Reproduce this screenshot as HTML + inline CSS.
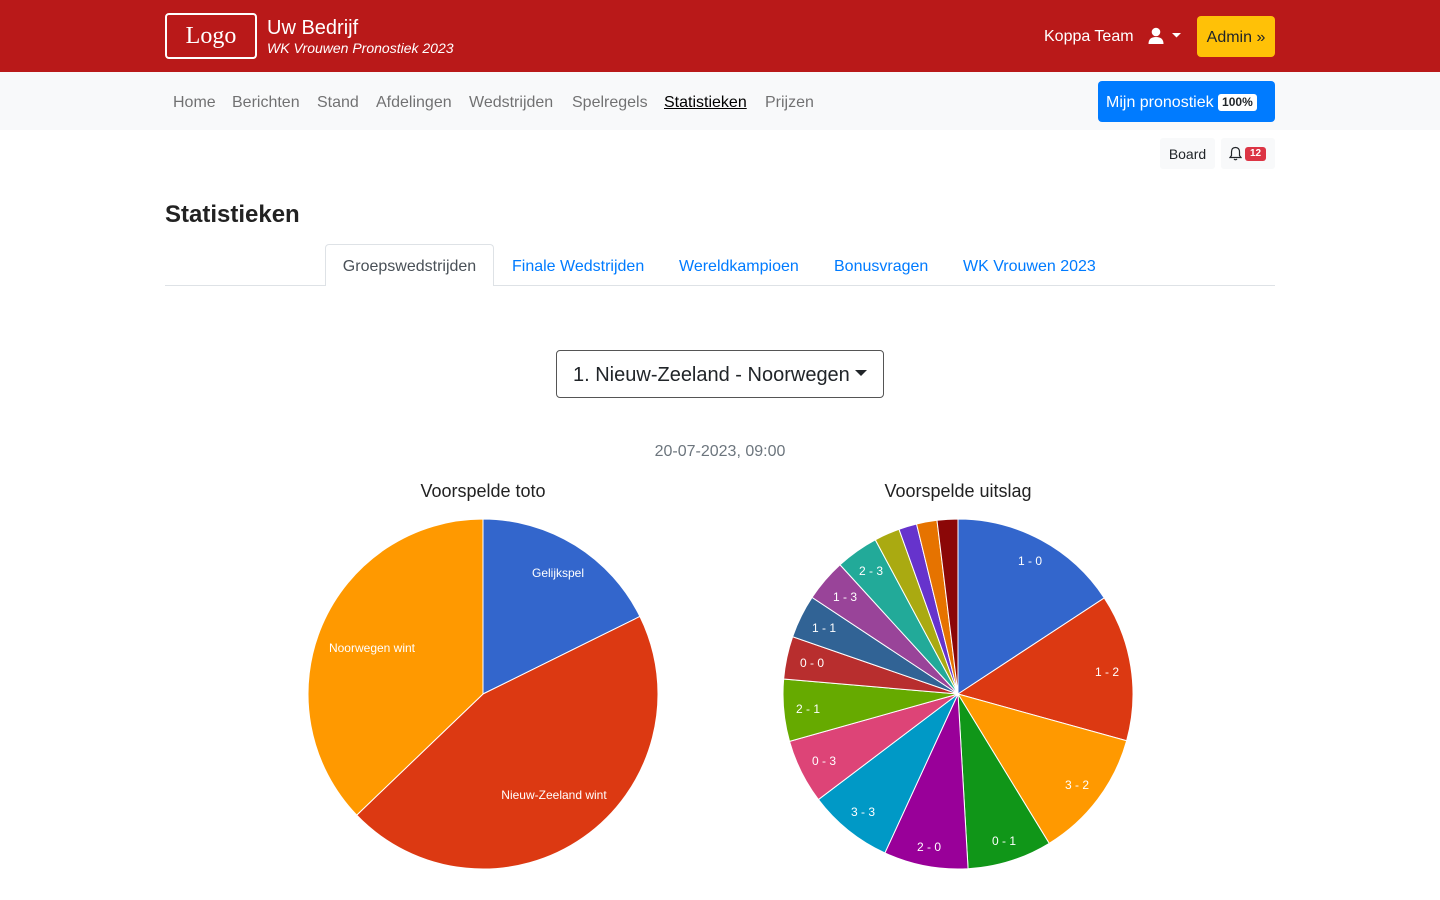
<!DOCTYPE html>
<html><head><meta charset="utf-8"><style>
*{box-sizing:border-box;margin:0;padding:0}
body{width:1440px;height:900px;overflow:hidden;font-family:"Liberation Sans",Arial,sans-serif;background:#fff;color:#212529;position:relative}
.abs{position:absolute}
#hdr{left:0;top:0;width:1440px;height:72px;background:#b91919}
#nav{left:0;top:72px;width:1440px;height:58px;background:#f8f9fa}
.nv{top:94px;font-size:16px;color:rgba(0,0,0,.55)}
.tab{top:258px;font-size:16px;color:#007bff}
</style></head><body>
<div id="hdr" class="abs"></div>
<div class="abs" style="left:165px;top:13px;width:92px;height:46px;border:2px solid #fff;border-radius:4px;color:#fff;font-family:'Liberation Serif',serif;font-size:24px;text-align:center;line-height:42px">Logo</div>
<div class="abs" style="left:267px;top:17px;color:#fff;font-size:20px">Uw Bedrijf</div>
<div class="abs" style="left:267px;top:40px;color:#fff;font-size:14px;font-style:italic">WK Vrouwen Pronostiek 2023</div>
<div class="abs" style="left:1044px;top:28px;color:#fff;font-size:16px">Koppa Team</div>
<svg class="abs" style="left:1148px;top:27px" width="36" height="18" viewBox="0 0 36 18"><circle cx="8" cy="5" r="4.3" fill="#fff"/><path d="M0.5 17 Q0.5 10 8 10 Q15.5 10 15.5 17Z" fill="#fff"/><path d="M24 6 L33 6 L28.5 10.5Z" fill="#fff"/></svg>
<div class="abs" style="left:1197px;top:16px;width:78px;height:41px;background:#ffc107;border-radius:4px;font-size:16px;color:#212529;text-align:center;line-height:43px">Admin »</div>
<div id="nav" class="abs"></div>
<div class="abs nv" style="left:173px">Home</div>
<div class="abs nv" style="left:232px">Berichten</div>
<div class="abs nv" style="left:317px">Stand</div>
<div class="abs nv" style="left:376px">Afdelingen</div>
<div class="abs nv" style="left:469px">Wedstrijden</div>
<div class="abs nv" style="left:572px">Spelregels</div>
<div class="abs nv" style="left:664px;color:#000;text-decoration:underline">Statistieken</div>
<div class="abs nv" style="left:765px">Prijzen</div>
<div class="abs" style="left:1098px;top:81px;width:177px;height:41px;background:#007bff;border-radius:4px;color:#fff;font-size:16px;line-height:43px;padding-left:8px">Mijn pronostiek <span style="display:inline-block;background:#fff;color:#212529;font-size:12px;font-weight:bold;border-radius:3px;padding:0 4px;line-height:17px;vertical-align:1px">100%</span></div>
<div class="abs" style="left:1160px;top:138px;width:55px;height:31px;background:#f8f9fa;border-radius:3px;font-size:14px;text-align:center;line-height:32px">Board</div>
<div class="abs" style="left:1221px;top:138px;width:54px;height:31px;background:#f8f9fa;border-radius:3px"></div>
<svg class="abs" style="left:1229px;top:146px" width="13" height="15" viewBox="0 0 13 15"><path d="M6.5 1.5 Q2.5 1.5 2.5 6 L2.5 9.5 L1 11.5 L12 11.5 L10.5 9.5 L10.5 6 Q10.5 1.5 6.5 1.5Z M5 13 Q6.5 14.5 8 13" fill="none" stroke="#212529" stroke-width="1.2"/></svg>
<div class="abs" style="left:1245px;top:147px;width:21px;height:14px;background:#dc3545;border-radius:3px;color:#fff;font-size:10px;font-weight:bold;text-align:center;line-height:14px">12</div>
<div class="abs" style="left:165px;top:201px;font-size:24px;font-weight:bold;color:#222">Statistieken</div>
<div class="abs" style="left:165px;top:285px;width:1110px;height:1px;background:#dee2e6"></div>
<div class="abs" style="left:325px;top:244px;width:169px;height:42px;background:#fff;border:1px solid #dee2e6;border-bottom:none;border-radius:4px 4px 0 0;font-size:16px;color:#495057;text-align:center;line-height:44px">Groepswedstrijden</div>
<div class="abs tab" style="left:512px">Finale Wedstrijden</div>
<div class="abs tab" style="left:679px">Wereldkampioen</div>
<div class="abs tab" style="left:834px">Bonusvragen</div>
<div class="abs tab" style="left:963px">WK Vrouwen 2023</div>
<div class="abs" style="left:556px;top:350px;width:328px;height:48px;border:1px solid #555;border-radius:4px;font-size:20px;line-height:49px;padding-left:16px;color:#212529">1. Nieuw-Zeeland - Noorwegen</div>
<svg class="abs" style="left:855px;top:370px" width="12" height="7"><path d="M0 0 L12 0 L6 6Z" fill="#212529"/></svg>
<div class="abs" style="left:0;width:1440px;top:443px;text-align:center;font-size:16px;color:#6c757d">20-07-2023, 09:00</div>
<div class="abs" style="left:283px;width:400px;top:481px;text-align:center;font-size:18px;color:#222">Voorspelde toto</div>
<div class="abs" style="left:758px;width:400px;top:481px;text-align:center;font-size:18px;color:#222">Voorspelde uitslag</div>
<svg class="abs" style="left:0;top:0" width="1440" height="900" id="pies">
<g id="p1"></g><g id="p2"></g>
<g font-family="Liberation Sans,Arial,sans-serif" font-size="12" fill="#fff" text-anchor="middle">
<text x="558" y="577">Gelijkspel</text>
<text x="372" y="652">Noorwegen wint</text>
<text x="554" y="799">Nieuw-Zeeland wint</text>
<text x="1030" y="565">1 - 0</text>
<text x="1107" y="676">1 - 2</text>
<text x="1077" y="789">3 - 2</text>
<text x="1004" y="845">0 - 1</text>
<text x="929" y="851">2 - 0</text>
<text x="863" y="816">3 - 3</text>
<text x="824" y="765">0 - 3</text>
<text x="808" y="713">2 - 1</text>
<text x="812" y="667">0 - 0</text>
<text x="824" y="632">1 - 1</text>
<text x="845" y="601">1 - 3</text>
<text x="871" y="575">2 - 3</text>
</g>
</svg>
<script>
function pie(id,cx,cy,r,ends,cols){var g=document.getElementById(id),a0=0,h='';
for(var i=0;i<ends.length;i++){var a1=ends[i];var t0=a0*Math.PI/180,t1=a1*Math.PI/180;
var x0=cx+r*Math.sin(t0),y0=cy-r*Math.cos(t0),x1=cx+r*Math.sin(t1),y1=cy-r*Math.cos(t1);
h+='<path d="M'+cx+' '+cy+' L'+x0+' '+y0+' A'+r+' '+r+' 0 '+((a1-a0)>180?1:0)+' 1 '+x1+' '+y1+'Z" fill="'+cols[i]+'" stroke="#fff" stroke-width="1"/>';a0=a1;}
g.innerHTML=h;}
pie('p1',483,694,175,[63.7,226.2,360],['#3366cc','#dc3912','#ff9900']);
pie('p2',958,694,175,[56.7,105.5,148.6,176.7,204.7,232.9,254.3,274.9,289.1,303.5,317.6,331.8,340.3,346.3,353.1,360],
['#3366cc','#dc3912','#ff9900','#109618','#990099','#0099c6','#dd4477','#66aa00','#b82e2e','#316395','#994499','#22aa99','#aaaa11','#6633cc','#e67300','#8b0707']);
</script>
</body></html>
